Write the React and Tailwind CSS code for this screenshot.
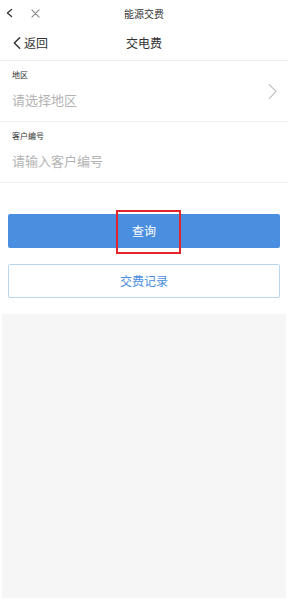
// 交电费 page inside a mobile web-view.

function ChevronLeft({ className }) {
  return (
    <svg viewBox="0 0 12 20" className={className} fill="none" stroke="currentColor" strokeWidth="2.2" strokeLinecap="round" strokeLinejoin="round">
      <path d="M10 2 L2 10 L10 18" />
    </svg>
  );
}

export default function App() {
  return (
    <div
      className="w-[288px] h-[600px] bg-white flex flex-col overflow-hidden"
      style={{ fontFamily: '"Noto Sans CJK SC", "Noto Sans", sans-serif' }}
    >
      {/* web-view chrome */}
      <div className="relative h-[26px] flex items-center px-[6px] text-[#333]">
        <svg viewBox="0 0 10 12" className="w-[7px] h-[10px]" fill="none" stroke="currentColor" strokeWidth="1.8" strokeLinecap="round" strokeLinejoin="round">
          <path d="M8 1 L2 6 L8 11" />
        </svg>
        <svg viewBox="0 0 10 10" className="ml-[18px] w-[9px] h-[9px] text-[#888]" fill="none" stroke="currentColor" strokeWidth="1.2" strokeLinecap="round">
          <path d="M1 1 L9 9 M9 1 L1 9" />
        </svg>
        <div className="absolute inset-x-0 top-0 h-full flex items-center justify-center text-[10px] text-[#333] pointer-events-none">
          能源交费
        </div>
      </div>

      {/* page header */}
      <div className="relative h-[35px] flex items-center px-[13px] border-b border-[#efefef]">
        <div className="flex items-center gap-[3px] text-[#333]">
          <ChevronLeft className="w-[8px] h-[14px]" />
          <span className="text-[12px]">返回</span>
        </div>
        <div className="absolute inset-0 flex items-center justify-center text-[12px] text-[#333] pointer-events-none">
          交电费
        </div>
      </div>

      {/* form */}
      <div className="flex flex-col">
        <div className="relative h-[61px] px-[12px] pt-[9px] border-b border-[#f0f0f0]">
          <div className="text-[8px] leading-[10px] text-[#333]">地区</div>
          <div className="mt-[12px] text-[13px] leading-[16px] text-[#b3b3b3]">请选择地区</div>
          <svg viewBox="0 0 10 18" className="absolute right-[11px] top-[22px] w-[9px] h-[17px] text-[#9a9a9a]" fill="none" stroke="currentColor" strokeWidth="1.1">
            <path d="M1 1 L9 9 L1 17" />
          </svg>
        </div>
        <div className="h-[61px] px-[12px] pt-[9px] border-b border-[#f0f0f0]">
          <div className="text-[8px] leading-[10px] text-[#333]">客户编号</div>
          <div className="mt-[12px] text-[13px] leading-[16px] text-[#b3b3b3]">请输入客户编号</div>
        </div>
      </div>

      {/* actions */}
      <div className="flex flex-col gap-[16px] px-[8px] pt-[31px] pb-[16px]">
        <div className="relative">
          <button className="w-full h-[34px] rounded-[2px] bg-[#4a8ee0] text-white text-[12px]">查询</button>
          <div className="absolute left-[108px] top-[-4px] w-[65px] h-[44px] border-2 border-[#e3242b] pointer-events-none" />
        </div>
        <button className="w-full h-[34px] rounded-[2px] border border-[#bcd5ef] bg-white text-[#4a8ee0] text-[12px]">
          交费记录
        </button>
      </div>

      <div className="flex-1 mx-[2px] mb-[2px] bg-[#f6f6f6]" />
    </div>
  );
}
